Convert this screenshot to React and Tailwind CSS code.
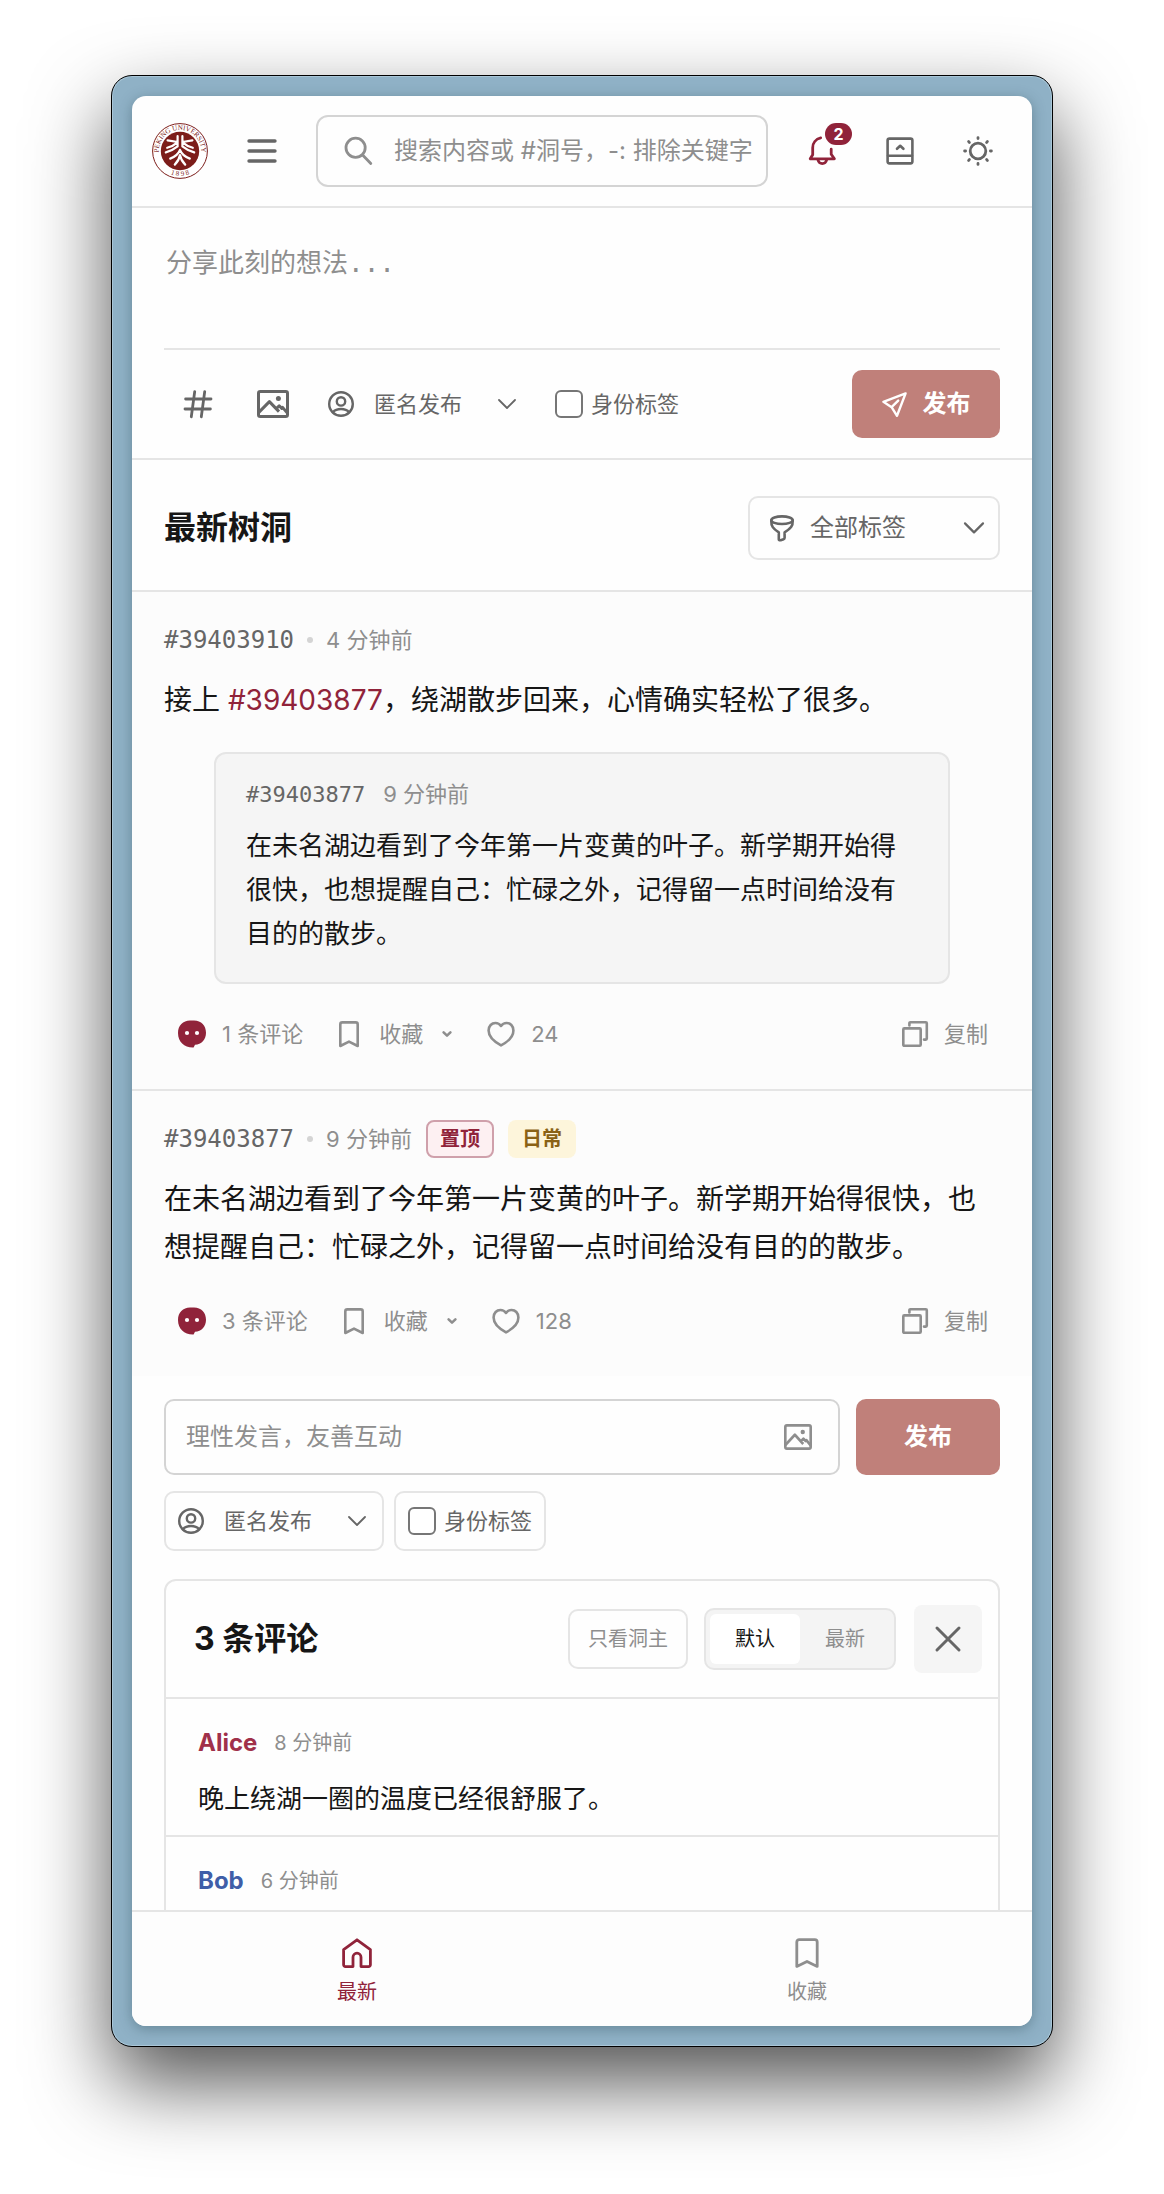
import React, { useState } from 'react';

const FONT = "font-['Inter','Noto_Sans_CJK_SC',sans-serif]";
const MONO = "font-['DejaVu_Sans_Mono','Noto_Sans_CJK_SC',monospace]";

const Icon = ({ w = 28, h = 28, stroke = 2.6, className = '', children }) => (
  <svg
    width={w}
    height={h}
    viewBox={`0 0 ${w} ${h}`}
    fill="none"
    stroke="currentColor"
    strokeWidth={stroke}
    strokeLinecap="round"
    strokeLinejoin="round"
    aria-hidden="true"
    className={`shrink-0 overflow-visible ${className}`}
  >
    {children}
  </svg>
);

const ImageIcon = ({ small = false }) => (
  <svg
    width={small ? 28 : 32}
    height={small ? 26 : 28}
    viewBox="0 0 32 28"
    fill="none"
    stroke="currentColor"
    strokeWidth="3"
    strokeLinejoin="round"
    preserveAspectRatio="none"
    aria-hidden="true"
    className="shrink-0"
  >
    <rect x="1.5" y="1.5" width="29" height="25" rx="1.8" />
    <path d="M1.6 22.6 12.4 11.6 22 21.6M18.6 19.4l3.6-3.6 2.6 2.6.8-1 5 6" />
    <circle cx="21.4" cy="8.6" r="2.5" fill="currentColor" stroke="none" />
  </svg>
);

const UserIcon = () => (
  <Icon w={26} h={26} stroke={2.4}>
    <circle cx="13" cy="13" r="11.8" />
    <circle cx="13" cy="10.4" r="4.2" />
    <path d="M4.8 21.2C6.6 19.2 9.4 18 13 18s6.4 1.2 8.2 3.2" />
  </Icon>
);

const BookmarkIcon = () => (
  <Icon>
    <path d="M5.3 26V4.4a2 2 0 0 1 2-2h13.4a2 2 0 0 1 2 2V26L14 21.6z" />
  </Icon>
);

const BookmarkLargeIcon = () => (
  <Icon w={30} h={30} stroke={2.8}>
    <path d="M4.8 28.4V4a2.4 2.4 0 0 1 2.4-2.4h15.6A2.4 2.4 0 0 1 25.2 4v24.4L15 23.4z" />
  </Icon>
);

const HomeIcon = () => (
  <Icon w={30} h={30} stroke={2.8}>
    <path d="M11 28.6H3.4a1.8 1.8 0 0 1-1.8-1.8V11.6L15 1.8l13.4 9.8v15.2a1.8 1.8 0 0 1-1.8 1.8H19v-9.4a4 4 0 0 0-8 0z" />
  </Icon>
);

const CommentIcon = () => (
  <svg width="28" height="28" viewBox="0 0 28 28" aria-hidden="true" className="shrink-0">
    <path
      d="M12 .6h4C23.4.6 28 5.8 28 12.8 28 20 23.4 24.4 17 24.8L15.6 27.6C6.6 28 0 22 0 13 0 5.6 5 .6 12 .6z"
      fill="#90233a"
    />
    <circle cx="9" cy="13" r="2.1" fill="#fff" />
    <circle cx="19" cy="13" r="2.1" fill="#fff" />
  </svg>
);

const HeartIcon = () => (
  <Icon>
    <path d="M14 25.4C8.4 22.4 1.6 17.4 1.6 10.6 1.6 5.8 4.8 3 8.4 3c2.4 0 4.4 1.2 5.6 3C15.2 4.2 17.2 3 19.6 3c3.6 0 6.8 2.8 6.8 7.6 0 6.8-6.8 11.8-12.4 14.8z" />
  </Icon>
);

const CopyIcon = () => (
  <Icon w={26} h={26}>
    <rect x="1.3" y="7.4" width="17.4" height="17.4" rx="1" />
    <path d="M7.4 4.4V2.2a1 1 0 0 1 1-1h15.4a1 1 0 0 1 1 1v15.4a1 1 0 0 1-1 1h-1.8" />
  </Icon>
);

const ChevronIcon = () => (
  <Icon w={18} h={10} stroke={1.8}>
    <path d="M1 1l8 8 8-8" />
  </Icon>
);

const Logo = () => (
  <svg width="56" height="56" viewBox="0 0 56 56" role="img" aria-label="Peking University" className="shrink-0">
    <defs>
      <path id="seal-top" d="M9.4 38.5A21.3 21.3 0 1 1 46.6 38.5" />
      <path id="seal-bottom" d="M12 47.2A25.2 25.2 0 0 0 44 47.2" />
    </defs>
    <circle cx="28" cy="28" r="27.4" fill="#fff" stroke="#7c1d1a" strokeWidth="1" />
    <g fill="#7c1d1a" fontFamily="Liberation Serif, serif" fontSize="7">
      <text textAnchor="middle">
        <textPath href="#seal-top" startOffset="50%">PEKING UNIVERSITY</textPath>
      </text>
      <text textAnchor="middle">
        <textPath href="#seal-bottom" startOffset="50%">1 8 9 8</textPath>
      </text>
    </g>
    <circle cx="28" cy="28" r="19.2" fill="#7c1d1a" />
    <g fill="none" stroke="#fff" strokeWidth="2.2" strokeLinecap="round" strokeLinejoin="round">
      <path d="M25.6 13.2V23.4C22.6 25.8 18 28.4 13.8 29.4M15.6 17.4l10 1.6M25.2 19.6c-3 2.6-6 4.2-10 5.2" />
      <path d="M30.4 13.2V23.4c3 2.4 7.6 5 11.8 6M40.4 17.4l-10 1.6M30.8 19.6c3 2.6 6 4.2 10 5.2" />
      <path d="M28 27c-1.6 4-5.4 7-9.8 8.6M28 27c1.6 4 5.4 7 9.8 8.6M28 32c-.6 3.6-2.6 7-5.2 9.6M28 32c.6 3.6 2.6 7 5.2 9.6" />
    </g>
  </svg>
);

const IconButton = ({ label, className = 'text-[#666]', children }) => (
  <button type="button" aria-label={label} className={`flex h-17 w-17 shrink-0 items-center justify-center rounded-lg ${className}`}>
    {children}
  </button>
);

const IdentitySelect = ({ id, bordered = false }) => (
  <label
    htmlFor={id}
    className={`flex h-15 w-[220px] items-center rounded-[10px] border-2 px-3 text-[#666] ${
      bordered ? 'border-[#e5e5e5]' : 'border-transparent'
    }`}
  >
    <UserIcon />
    <select id={id} aria-label="发布身份" className="ml-5 min-w-0 flex-1 appearance-none bg-transparent text-[22px] leading-8 outline-none">
      <option>匿名发布</option>
    </select>
    <ChevronIcon />
    <span className="w-1" />
  </label>
);

const TagCheckbox = ({ id, bordered = false }) => (
  <label
    htmlFor={id}
    className={`flex h-15 items-center gap-2 rounded-[10px] border-2 px-3 text-[22px] leading-8 whitespace-nowrap text-[#666] ${
      bordered ? 'border-[#e5e5e5]' : 'border-transparent'
    }`}
  >
    <input id={id} type="checkbox" className="size-7 appearance-none rounded-md border-2 border-[#767676] bg-white checked:bg-[#90233a]" />
    身份标签
  </label>
);

const Header = () => (
  <header className="flex h-28 shrink-0 items-center gap-5 border-b-2 border-[#e5e5e5] px-5">
    <Logo />
    <IconButton label="菜单">
      <Icon w={30} h={24} stroke={3.4}>
        <path d="M2 2h26M2 12h26M2 22h26" />
      </Icon>
    </IconButton>
    <label htmlFor="search" className="flex h-18 min-w-0 flex-1 items-center rounded-xl border-2 border-[#d4d4d4] pr-1 pl-[26px] text-[#8e8e8e]">
      <Icon stroke={2.8}>
        <circle cx="11.6" cy="10.7" r="9.6" />
        <path d="M18.6 18l8.2 8.4" />
      </Icon>
      <input
        id="search"
        type="text"
        placeholder="搜索内容或 #洞号，-: 排除关键字"
        className="ml-[22px] min-w-0 flex-1 bg-transparent text-2xl text-[#161616] outline-none placeholder:text-[#8e8e8e]"
      />
    </label>
    <div className="flex gap-[10px]">
      <div className="relative">
        <IconButton label="通知" className="text-[#90233a]">
          <Icon stroke={2.8}>
            <path d="M12.7.9C7.6 2 4.7 6.2 4.7 10.8v7L2.2 21.8h24.2l-3.2-4.6v-5" />
            <path d="M10 23c.6 2.4 2 3.6 4.3 3.6s3.7-1.2 4.3-3.6" />
          </Icon>
        </IconButton>
        <span className="absolute top-[6px] left-[37px] flex h-[22px] w-[27px] items-center justify-center rounded-full bg-[#90233a] text-base font-bold text-white">
          2
        </span>
      </div>
      <IconButton label="收起">
        <Icon>
          <rect x="1.6" y="1.6" width="24.8" height="24.8" rx="1.8" />
          <path d="M2 18.8h24M11 11.8l3.2-3 3.2 3" />
        </Icon>
      </IconButton>
      <IconButton label="主题">
        <Icon w={30} h={30} stroke={2.8}>
          <circle cx="15" cy="15" r="7.8" />
          <path d="M15 1.6v1M15 27.4v1M1.6 15h1M27.4 15h1M5.6 5.6l.8.8M23.6 23.6l.8.8M24.4 5.6l-.8.8M6.4 23.6l-.8.8" />
        </Icon>
      </IconButton>
    </div>
  </header>
);

const Composer = () => (
  <form className="border-b-2 border-[#e5e5e5] px-8 pt-[30px]" onSubmit={(e) => e.preventDefault()}>
    <textarea
      aria-label="分享此刻的想法"
      placeholder="分享此刻的想法..."
      className={`block h-28 w-full resize-none border-b-2 border-[#e5e5e5] bg-transparent px-[2px] text-[26px] leading-[50px] outline-none placeholder:text-[#8e8e8e] ${MONO}`}
    />
    <div className="flex items-center gap-[7px] py-5">
      <IconButton label="话题">
        <Icon stroke={2.8}>
          <path d="M10.7 1.6 7.3 26.8M20.7 1.6l-3.4 25.2M1.6 9h25.4M1 19h25.4" />
        </Icon>
      </IconButton>
      <IconButton label="图片">
        <ImageIcon />
      </IconButton>
      <IdentitySelect id="post-identity" />
      <TagCheckbox id="post-tag" />
      <button type="submit" className="ml-auto flex h-17 w-37 items-center justify-center gap-4 rounded-[10px] bg-[#c0807a] text-2xl font-bold text-white">
        <Icon w={25} h={25} stroke={2.4}>
          <path d="M23.6 1.4 1.4 9.8l8.2 5.4L15 23.8zM9.6 15.2l6.6-6.6" />
        </Icon>
        发布
      </button>
    </div>
  </form>
);

const FeedTitle = () => (
  <div className="flex items-center justify-between border-b-2 border-[#e5e5e5] px-8 pt-9 pb-[30px]">
    <h1 className="text-[32px] leading-12 font-bold">最新树洞</h1>
    <label htmlFor="tag-filter" className="flex h-16 w-63 items-center rounded-[10px] border-2 border-[#e5e5e5] pr-[14px] pl-5 text-[#666]">
      <Icon w={24} h={26}>
        <ellipse cx="12" cy="5.2" rx="10.7" ry="3.8" />
        <path d="M1.3 5.6C1 11 3 13.6 8.8 17.4v7c0 1 1 1 1.8.8l3-1c.8-.2 1-.6 1-1.4v-5.4C20.8 13.6 23 11 22.7 5.6" />
      </Icon>
      <select id="tag-filter" aria-label="标签" className="ml-4 min-w-0 flex-1 appearance-none bg-transparent text-2xl outline-none">
        <option>全部标签</option>
      </select>
      <Icon w={20} h={12} stroke={2.2}>
        <path d="M1 1.4l9 9 9-9" />
      </Icon>
    </label>
  </div>
);

const PostActions = ({ comments, likes }) => (
  <div className="mt-5 flex h-15 items-center gap-1 text-[22px] whitespace-nowrap text-[#8e8e8e]">
    <button type="button" className="flex items-center gap-4 px-[14px]">
      <CommentIcon />
      {comments} 条评论
    </button>
    <button type="button" className="flex items-center gap-4 px-[14px]">
      <BookmarkIcon />
      收藏
      <Icon w={16} h={16}>
        <path d="M4.6 6.4 8 9.6l3.4-3.2" />
      </Icon>
    </button>
    <button type="button" className="flex items-center gap-4 px-[14px]">
      <HeartIcon />
      {likes}
    </button>
    <button type="button" className="ml-auto flex items-center gap-4 pr-3 pl-[14px]">
      <CopyIcon />
      复制
    </button>
  </div>
);

const Post = ({ id, time, badges, comments, likes, quote, className = '', children }) => (
  <article className={`bg-[#fcfcfc] px-8 pt-7 pb-[25px] ${className}`}>
    <div className="flex h-10 items-center text-[22px] text-[#8e8e8e]">
      <a href={`#${id}`} className={`text-2xl text-[#666] ${MONO}`}>#{id}</a>
      <span className="mx-[13px] size-[6px] rounded-full bg-[#d4d4d4]" />
      <span>{time}</span>
      {badges}
    </div>
    <p className="mt-4 text-[28px] leading-12">{children}</p>
    {quote && (
      <blockquote className="mx-[50px] mt-7 rounded-xl border-2 border-[#e5e5e5] bg-[#f5f5f5] px-[30px] pt-6 pb-[26px]">
        <div className="flex h-8 items-center gap-[18px] text-[22px] text-[#8e8e8e]">
          <a href={`#${quote.id}`} className={`text-[#666] ${MONO}`}>#{quote.id}</a>
          <span>{quote.time}</span>
        </div>
        <p className="mt-[14px] text-[26px] leading-11">{quote.text}</p>
      </blockquote>
    )}
    <PostActions comments={comments} likes={likes} />
  </article>
);

const Comment = ({ name, color, time, children }) => (
  <li className="border-t-2 border-[#e5e5e5] px-8 pt-[26px] pb-[14px]">
    <div className="flex h-9 items-center gap-[17px]">
      <span className={`text-2xl font-bold ${color}`}>{name}</span>
      <span className="text-xl text-[#8e8e8e]">{time}</span>
    </div>
    <p className="mt-4 min-h-11 text-[26px] leading-11">{children}</p>
  </li>
);

const Comments = () => {
  const [sort, setSort] = useState('默认');

  return (
    <section className="px-8 pt-[23px]">
      <form className="flex gap-4" onSubmit={(e) => e.preventDefault()}>
        <div className="flex h-19 min-w-0 flex-1 items-center rounded-[10px] border-2 border-[#d4d4d4] pr-[26px] pl-5 text-[#8e8e8e]">
          <input
            aria-label="评论"
            placeholder="理性发言，友善互动"
            className="min-w-0 flex-1 bg-transparent text-2xl text-[#161616] outline-none placeholder:text-[#8e8e8e]"
          />
          <button type="button" aria-label="添加图片">
            <ImageIcon small />
          </button>
        </div>
        <button type="submit" className="h-19 w-36 rounded-[10px] bg-[#c0807a] text-2xl font-bold text-white">
          发布
        </button>
      </form>
      <div className="mt-4 flex gap-[10px]">
        <IdentitySelect id="comment-identity" bordered />
        <TagCheckbox id="comment-tag" bordered />
      </div>

      <div className="mt-7 rounded-xl border-2 border-[#e5e5e5]">
        <div className="flex h-29 items-center gap-[18px] pr-4 pl-7">
          <h2 className="mr-auto text-[32px] leading-12 font-bold">3 条评论</h2>
          <div className="flex items-center gap-4 text-xl">
            <button type="button" className="h-15 w-30 rounded-[10px] border-2 border-[#e5e5e5] text-[#8e8e8e]">
              只看洞主
            </button>
            <div className="flex h-[62px] w-48 rounded-[10px] border-2 border-[#e5e5e5] bg-[#f4f4f4] p-1">
              {['默认', '最新'].map((name) => (
                <button
                  key={name}
                  type="button"
                  aria-pressed={sort === name}
                  onClick={() => setSort(name)}
                  className={`flex-1 rounded-md ${sort === name ? 'bg-white text-[#161616]' : 'text-[#8e8e8e]'}`}
                >
                  {name}
                </button>
              ))}
            </div>
          </div>
          <IconButton label="关闭" className="bg-[#f5f5f5] text-[#666]">
            <Icon w={24} h={24} stroke={3}>
              <path d="M1 1l22 22M23 1 1 23" />
            </Icon>
          </IconButton>
        </div>
        <ul>
          <Comment name="Alice" color="text-[#a0304a]" time="8 分钟前">晚上绕湖一圈的温度已经很舒服了。</Comment>
          <Comment name="Bob" color="text-[#3f5ea8]" time="6 分钟前" />
        </ul>
      </div>
    </section>
  );
};

const BottomNav = () => (
  <nav className="grid h-29 shrink-0 grid-cols-2 border-t-2 border-[#e5e5e5] bg-[#fdfdfd] text-xl leading-7">
    <a href="#latest" aria-current="page" className="flex flex-col items-center gap-[10px] pt-[26px] text-[#90233a]">
      <HomeIcon />
      最新
    </a>
    <a href="#saved" className="flex flex-col items-center gap-[10px] pt-[26px] text-[#8e8e8e]">
      <BookmarkLargeIcon />
      收藏
    </a>
  </nav>
);

const App = () => (
  <div className={`flex h-screen flex-col overflow-hidden bg-white pt-[75px] pb-[147px] text-[#161616] ${FONT}`}>
    <div className="mx-auto flex min-h-0 w-full max-w-[942px] flex-1 flex-col rounded-[21px] border border-black bg-[#8fb1c6] p-5 shadow-[inset_0_0_0_1px_#a9c6d7,0_36px_80px_rgba(0,0,0,0.68)]">
      <div className="flex min-h-0 flex-1 flex-col overflow-hidden rounded-[14px] bg-[#fefefe] shadow-[0_3px_14px_rgba(40,70,80,0.4)]">
        <Header />
        <main className="min-h-0 flex-1 overflow-y-auto [scrollbar-width:none]">
          <Composer />
          <FeedTitle />
          <Post
            id="39403910"
            time="4 分钟前"
            comments={1}
            likes={24}
            className="border-b-2 border-[#e5e5e5]"
            quote={{
              id: '39403877',
              time: '9 分钟前',
              text: '在未名湖边看到了今年第一片变黄的叶子。新学期开始得很快，也想提醒自己：忙碌之外，记得留一点时间给没有目的的散步。',
            }}
          >
            接上 <a href="#39403877" className="text-[#90233a]">#39403877</a>，绕湖散步回来，心情确实轻松了很多。
          </Post>
          <Post
            id="39403877"
            time="9 分钟前"
            comments={3}
            likes={128}
            badges={
              <>
                <span className="ml-[14px] flex h-[38px] items-center rounded-lg border-2 border-[#cfa0ab] bg-[#fdf0f2] px-3 text-xl font-bold text-[#90233a]">
                  置顶
                </span>
                <span className="ml-[14px] flex h-[38px] items-center rounded-lg bg-[#fdf5db] px-[14px] text-xl font-bold text-[#8a6216]">
                  日常
                </span>
              </>
            }
          >
            在未名湖边看到了今年第一片变黄的叶子。新学期开始得很快，也想提醒自己：忙碌之外，记得留一点时间给没有目的的散步。
          </Post>
          <Comments />
        </main>
        <BottomNav />
      </div>
    </div>
  </div>
);

export default App;
